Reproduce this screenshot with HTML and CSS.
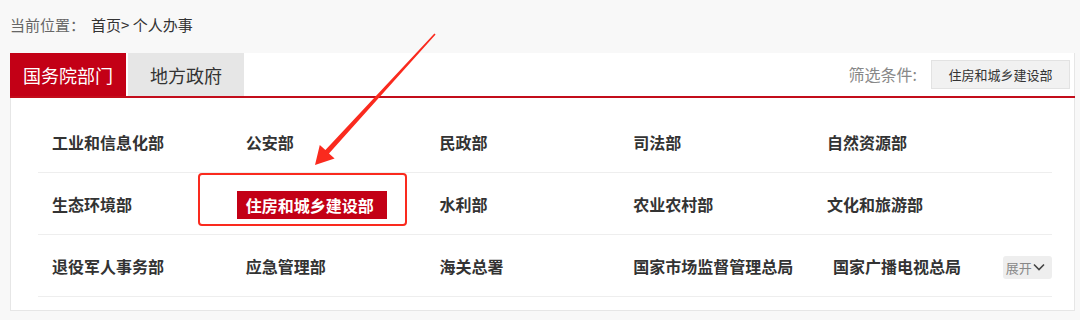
FILE: index.html
```html
<!DOCTYPE html>
<html lang="zh-CN">

<head>
    <meta charset="UTF-8">
    <title>个人办事</title>
    <link rel="stylesheet" href="styles.css">
</head>

<body>

    <div class="crumb">
        当前位置：<span class="crumb-path">首页&gt; 个人办事</span>
    </div>

    <div class="panel">
        <div class="panel-head">
            <div class="tab active">国务院部门</div>
            <div class="tab">地方政府</div>
            <div class="filter">
                <span class="filter-label">筛选条件:</span>
                <button class="filter-btn">住房和城乡建设部</button>
            </div>
        </div>

        <div class="dept-list">
            <div class="row">
                <div class="cell">工业和信息化部</div>
                <div class="cell">公安部</div>
                <div class="cell">民政部</div>
                <div class="cell">司法部</div>
                <div class="cell">自然资源部</div>
                <div class="cell"></div>
            </div>
            <div class="row">
                <div class="cell">生态环境部</div>
                <div class="cell"><span class="selected">住房和城乡建设部</span></div>
                <div class="cell">水利部</div>
                <div class="cell">农业农村部</div>
                <div class="cell">文化和旅游部</div>
                <div class="cell"></div>
            </div>
            <div class="row">
                <div class="cell">退役军人事务部</div>
                <div class="cell">应急管理部</div>
                <div class="cell">海关总署</div>
                <div class="cell">国家市场监督管理总局</div>
                <div class="cell shift">国家广播电视总局</div>
                <div class="cell more-cell">
                    <button class="more">展开<svg width="12" height="8" viewBox="0 0 12 8"><path d="M1 1.5 L6 6.5 L11 1.5" fill="none" stroke="#444" stroke-width="1.6"/></svg></button>
                </div>
            </div>
        </div>
    </div>

    <!-- annotation drawn over the screenshot -->
    <svg class="marks" width="1080" height="320" viewBox="0 0 1080 320">
        <rect x="199" y="174" width="207" height="51" rx="3" fill="none" stroke="#fa2a1e" stroke-width="2"/>
        <polygon fill="#fa2a1e" points="435.6,34.4 329,153.4 334.6,158.5 315,165 319.8,144.9 325.4,150 434.4,33.6"/>
    </svg>

</body>

</html>
```

FILE: styles.css
```css
body {
    margin: 0;
    padding: 0 5px 0 10px;
    background: #f8f8f8;
    font-family: "Microsoft YaHei", "Noto Sans CJK SC", sans-serif;
    color: #333;
    position: relative;
    height: 320px;
    overflow: hidden;
}

.crumb {
    height: 53px;
    line-height: 50px;
    font-size: 15px;
    color: #666;
}

.crumb-path {
    color: #333;
    margin-left: 6px;
}

.panel {
    background: white;
    border: 1px solid #e6e6e6;
    border-top: none;
    height: 258px;
    box-sizing: border-box;
}

.panel-head {
    display: flex;
    align-items: stretch;
    gap: 2px;
    height: 43px;
    border-bottom: 2px solid #c30d1b;
    margin: 0 -1px;
}

.tab {
    width: 116px;
    display: flex;
    align-items: center;
    justify-content: center;
    font-size: 18px;
    background: #e6e6e6;
    color: #333;
}

.tab.active {
    background: #c30016;
    color: white;
}

.filter {
    margin-left: auto;
    display: flex;
    align-items: center;
    gap: 14px;
    padding-right: 5px;
    padding-bottom: 1px;
}

.filter-label {
    font-size: 16px;
    color: #888;
}

.filter-btn {
    height: 29px;
    width: 139px;
    border: 1px solid #e2e2e2;
    background: #f1f1f1;
    font-family: inherit;
    font-size: 13px;
    color: #333;
    padding: 0;
}

.dept-list {
    padding: 13px 22px 0 27px;
}

.row {
    display: grid;
    grid-template-columns: repeat(5, 193.75px) 1fr;
    height: 61px;
    border-bottom: 1px solid #eeeeee;
}

.cell {
    display: flex;
    align-items: center;
    padding-left: 14px;
    font-size: 16px;
    font-weight: bold;
    color: #333;
    white-space: nowrap;
}

.cell.shift {
    padding-left: 20px;
}

.selected {
    background: #c30016;
    color: white;
    height: 28px;
    line-height: 28px;
    padding: 0 13px 0 9px;
    margin-left: -9px;
    margin-top: 2px;
}

.more-cell {
    padding-left: 0;
    padding-top: 3px;
}

.more {
    display: flex;
    align-items: center;
    gap: 1px;
    height: 23px;
    width: 49px;
    margin-left: -4px;
    padding: 0 0 0 3px;
    border: none;
    border-radius: 3px;
    background: #eeeeee;
    font-family: inherit;
    font-size: 13px;
    color: #888;
}

.marks {
    position: absolute;
    top: 0;
    left: 0;
    pointer-events: none;
}
```
